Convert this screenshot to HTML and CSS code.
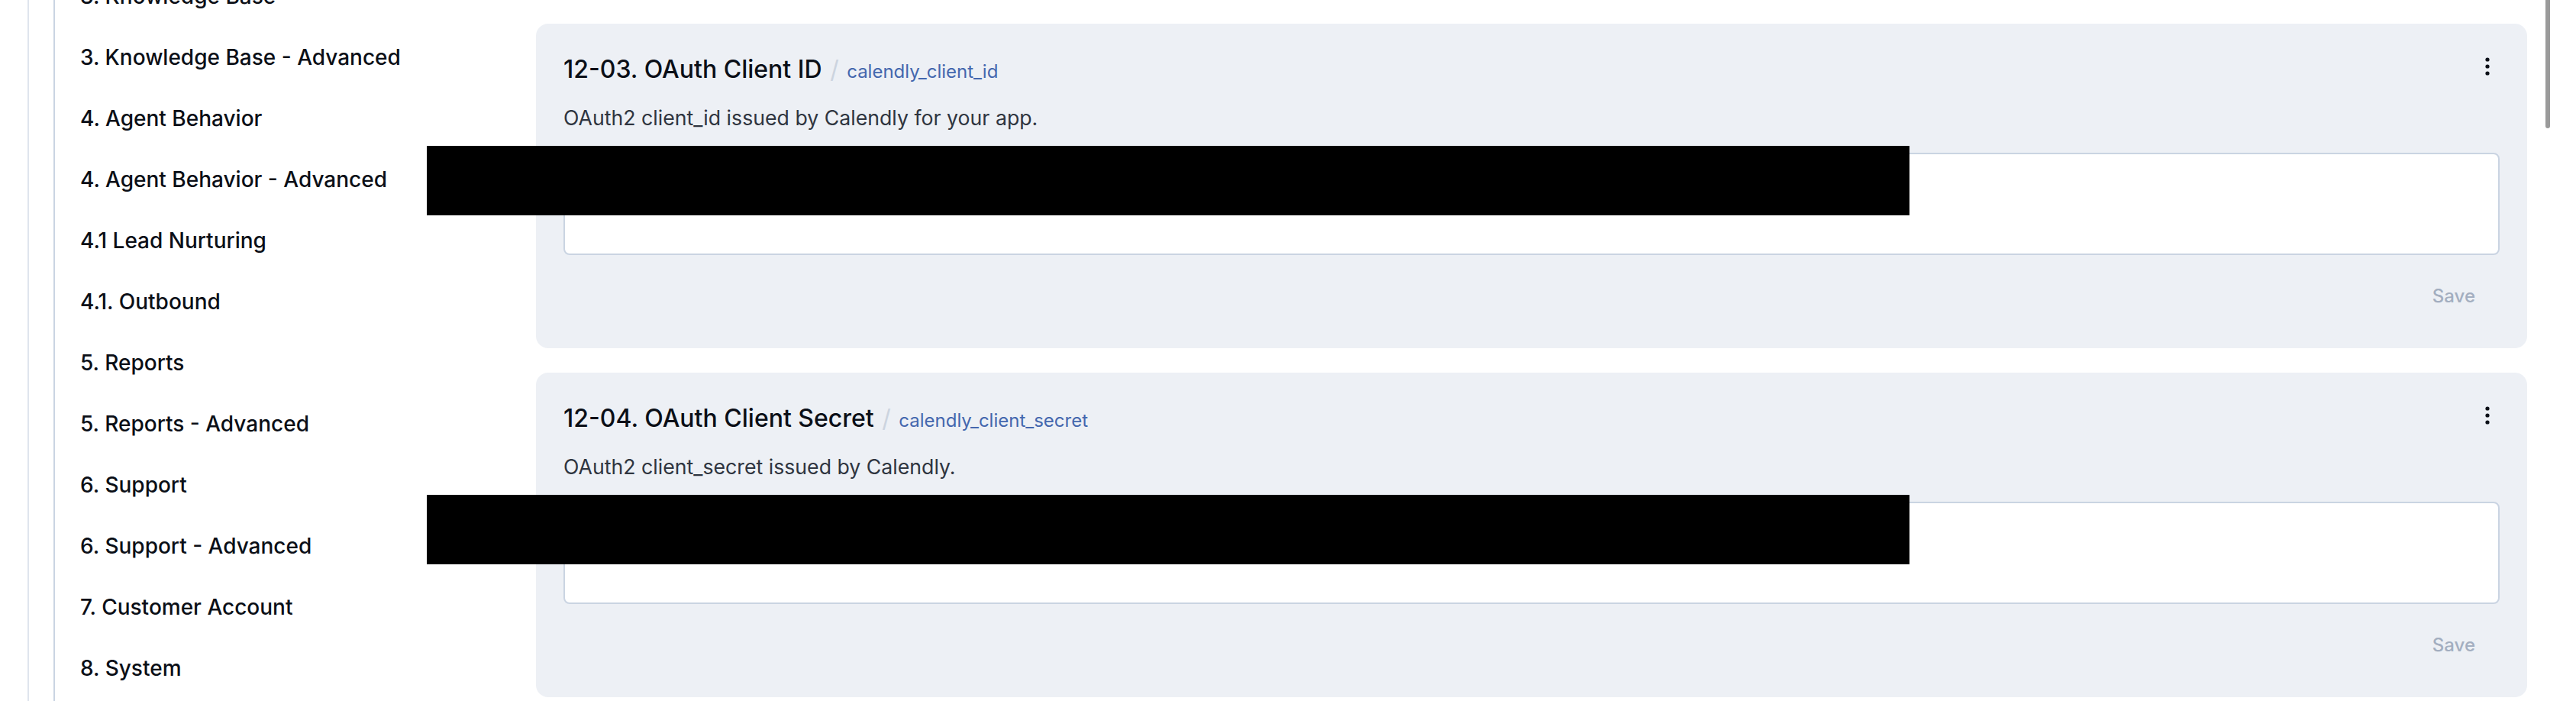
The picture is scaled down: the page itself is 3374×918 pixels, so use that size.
FILE: index.html
```html
<!DOCTYPE html>
<html lang="en">
<head>
  <meta charset="UTF-8" />
  <meta name="viewport" content="width=device-width, initial-scale=1.0" />
  <title>Settings - Calendly</title>
  <link rel="stylesheet" href="styles.css">
</head>
<body>

<div class="page">
  <aside class="rail"></aside>

  <nav class="section-nav">
    <ul>
      <li>3. Knowledge Base</li>
      <li>3. Knowledge Base - Advanced</li>
      <li>4. Agent Behavior</li>
      <li>4. Agent Behavior - Advanced</li>
      <li>4.1 Lead Nurturing</li>
      <li>4.1. Outbound</li>
      <li>5. Reports</li>
      <li>5. Reports - Advanced</li>
      <li>6. Support</li>
      <li>6. Support - Advanced</li>
      <li>7. Customer Account</li>
      <li>8. System</li>
    </ul>
  </nav>

  <main class="settings">
    <section class="setting-card">
      <div class="card-head">
        <h3>12-03. OAuth Client ID <span class="sep">/</span> <span class="key">calendly_client_id</span></h3>
        <button class="menu-btn" aria-label="More">
          <svg width="32" height="40" viewBox="0 0 32 40"><circle cx="16" cy="11" r="2.6"/><circle cx="16" cy="20" r="2.6"/><circle cx="16" cy="29" r="2.6"/></svg>
        </button>
      </div>
      <p class="desc">OAuth2 client_id issued by Calendly for your app.</p>
      <div class="field">
        <textarea rows="3"></textarea>
        <div class="redact"></div>
      </div>
      <div class="card-foot">
        <button class="save-btn" disabled>Save</button>
      </div>
    </section>

    <section class="setting-card">
      <div class="card-head">
        <h3>12-04. OAuth Client Secret <span class="sep">/</span> <span class="key">calendly_client_secret</span></h3>
        <button class="menu-btn" aria-label="More">
          <svg width="32" height="40" viewBox="0 0 32 40"><circle cx="16" cy="11" r="2.6"/><circle cx="16" cy="20" r="2.6"/><circle cx="16" cy="29" r="2.6"/></svg>
        </button>
      </div>
      <p class="desc">OAuth2 client_secret issued by Calendly.</p>
      <div class="field">
        <textarea rows="3"></textarea>
        <div class="redact"></div>
      </div>
      <div class="card-foot">
        <button class="save-btn" disabled>Save</button>
      </div>
    </section>
  </main>

  <div class="scroll-thumb"></div>
</div>

</body>
</html>
```

FILE: styles.css
```css
:root {
  --card-bg: #edf0f5;
  --line-light: #dfe5ed;
  --line: #cad4e2;
  --text: #0b0f17;
  --text-muted: #2f3540;
  --key: #4467ae;
  --save: #a3aec0;
}

* {
  margin: 0;
  padding: 0;
  box-sizing: border-box;
  font-family: 'Inter', 'Liberation Sans', sans-serif;
}

html, body {
  height: 918px;
  overflow: hidden;
  background: #ffffff;
  color: var(--text);
}

.page {
  display: flex;
  height: 918px;
  position: relative;
}

.rail {
  width: 38px;
  flex-shrink: 0;
  border-right: 2px solid var(--line-light);
}

.section-nav {
  width: 632px;
  flex-shrink: 0;
  margin-left: 32px;
  border-left: 2px solid var(--line);
  padding-left: 33px;
}

.section-nav ul {
  list-style: none;
  margin-top: -45px;
}

.section-nav li {
  font-size: 28px;
  line-height: 40px;
  padding: 20px 0;
  font-weight: 500;
  color: var(--text);
}

.settings {
  flex: 1;
  padding: 31px 64px 0 0;
  display: flex;
  flex-direction: column;
  gap: 32px;
}

.setting-card {
  background: var(--card-bg);
  border-radius: 16px;
  padding: 36px;
}

.card-head {
  display: flex;
  justify-content: space-between;
  align-items: flex-start;
}

.card-head h3 {
  font-size: 32px;
  line-height: 48px;
  font-weight: 500;
  color: var(--text);
}

.card-head .sep {
  color: #ccd4df;
  font-weight: 400;
  margin: 0 2px;
}

.card-head .key {
  font-size: 24px;
  font-weight: 400;
  color: var(--key);
}

.menu-btn {
  width: 32px;
  height: 40px;
  border: none;
  background: none;
  fill: #0b0f17;
  cursor: pointer;
}

.menu-btn svg {
  display: block;
}

.desc {
  margin-top: 16px;
  font-size: 26.7px;
  line-height: 40px;
  color: var(--text-muted);
}

.field {
  margin-top: 26px;
}

.field textarea {
  display: block;
  width: 100%;
  height: 134px;
  resize: none;
  border: 2px solid var(--line);
  border-radius: 8px;
  background: #ffffff;
  font-size: 28px;
  padding: 16px 24px;
}

.redact {
  position: absolute;
  left: 559px;
  width: 1942px;
  height: 91px;
  background: #000000;
  margin-top: -143px;
}

.card-foot {
  display: flex;
  justify-content: flex-end;
  margin-top: 22px;
}

.save-btn {
  border: none;
  background: none;
  font-size: 24px;
  line-height: 32px;
  padding: 16px 32px;
  color: var(--save);
  font-weight: 500;
}

.scroll-thumb {
  position: absolute;
  top: -10px;
  right: 34px;
  width: 6px;
  height: 178px;
  border-radius: 3px;
  background: #9a9a9a;
}
```
